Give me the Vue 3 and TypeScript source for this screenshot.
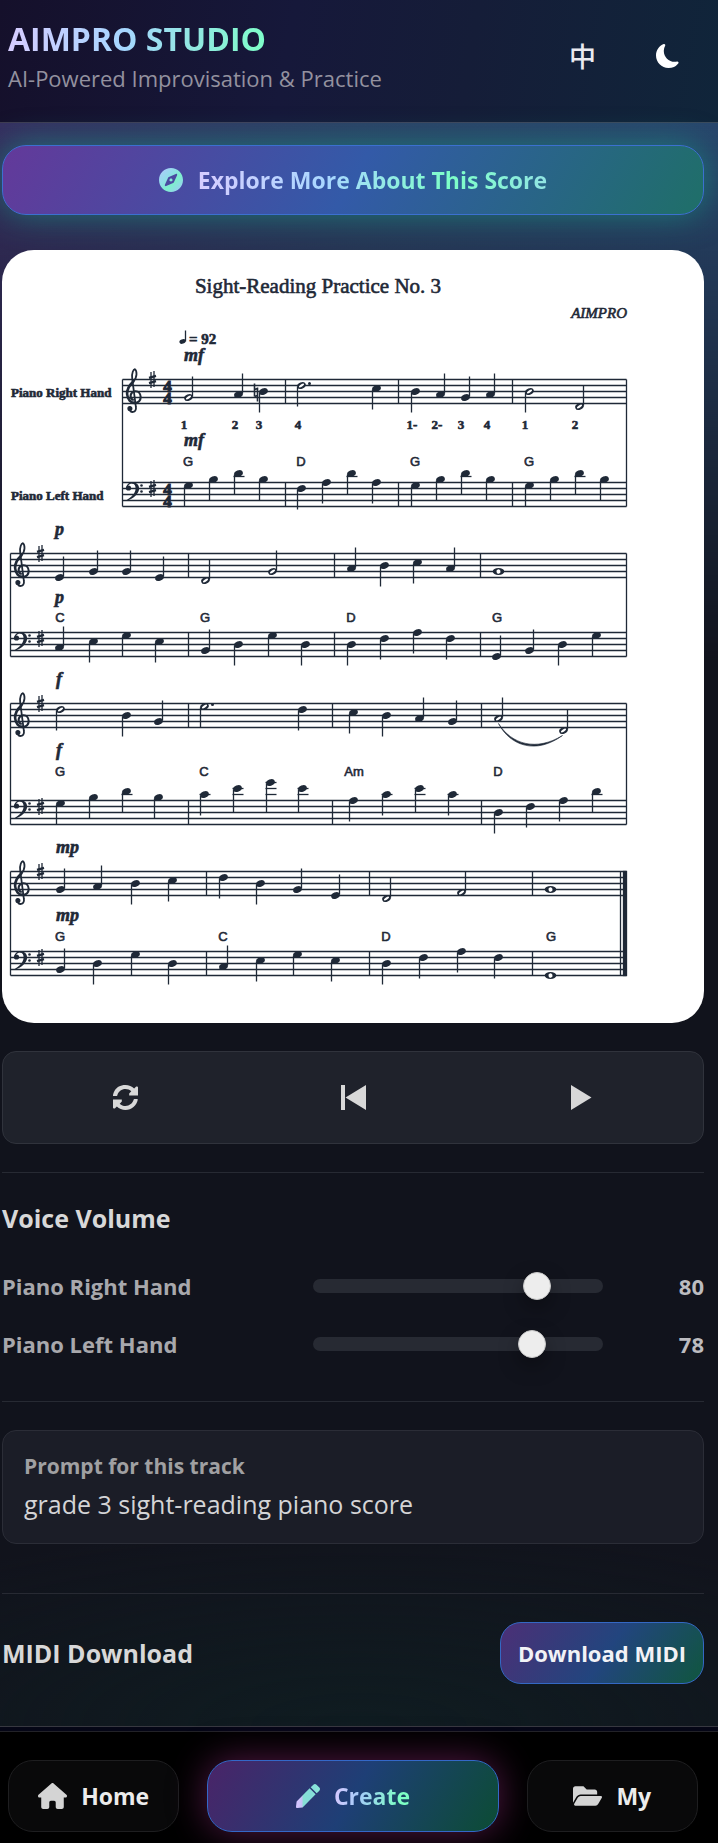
<script setup lang="ts">
import { computed, ref } from 'vue'

type Stem = 'up' | 'down' | 'none'
type Kind = 'quarter' | 'half' | 'whole'

interface Note {
  x: number
  step: number
  stem: Stem
  kind: Kind
  dot: boolean
}

interface Staff {
  top: number
  clef: 'treble' | 'bass'
  notes: Note[]
}

interface Label {
  x: number
  y: number
  text: string
}

interface System {
  left: number
  bars: number[]
  staves: Staff[]
  final: boolean
}

const RIGHT = 626

// "x:step" with u/d for the stem, h = half, w = whole, . = dotted
function parse(line: string): Note[] {
  return line.split(' ').map((token) => {
    const [x, rest] = token.split(':')
    return {
      x: Number(x),
      step: parseInt(rest, 10),
      stem: rest.includes('u') ? 'up' : rest.includes('d') ? 'down' : 'none',
      kind: rest.includes('w') ? 'whole' : rest.includes('h') ? 'half' : 'quarter',
      dot: rest.includes('.'),
    }
  })
}

const systems: System[] = [
  {
    left: 122,
    bars: [285, 398, 512],
    final: false,
    staves: [
      { top: 379, clef: 'treble', notes: parse('188:6uh 238:5u 263:4d 301:2dh. 376:3d 415:4d 440:5u 465:6u 490:5u 529:4dh 579:9uh') },
      { top: 482, clef: 'bass', notes: parse('188:1d 213:-1d 238:-3d 263:-1d 301:2d 326:0d 351:-3d 376:0d 415:1d 440:-1d 465:-3d 490:-1d 529:1d 554:-1d 579:-3d 604:-1d') },
    ],
  },
  {
    left: 10,
    bars: [188, 334, 480],
    final: false,
    staves: [
      { top: 553, clef: 'treble', notes: parse('59:8u 93:6u 126:6u 159:8u 205:9uh 272:6uh 351:5u 384:4d 417:3d 450:5u 498:6w') },
      { top: 632, clef: 'bass', notes: parse('59:5u 93:3d 126:1d 159:3d 205:6u 238:4d 272:1d 305:4d 351:4d 384:2d 417:0d 450:2d 496:8u 529:6u 562:4d 596:1d') },
    ],
  },
  {
    left: 10,
    bars: [188, 332, 481],
    final: false,
    staves: [
      { top: 703, clef: 'treble', notes: parse('60:2dh 126:4d 158:6u 204:1dh. 302:2d 353:3d 386:4d 419:5u 452:6u 498:5uh 563:9uh') },
      { top: 800, clef: 'bass', notes: parse('60:1d 93:-1d 126:-3d 158:-1d 204:-2d 237:-4d 270:-6d 302:-4d 353:0d 386:-2d 419:-4d 452:-2d 498:4d 530:2d 563:0d 596:-3d') },
    ],
  },
  {
    left: 10,
    bars: [206, 369, 532],
    final: true,
    staves: [
      { top: 871, clef: 'treble', notes: parse('60:6u 97:5u 135:4d 172:3d 223:2d 260:4d 297:6u 335:8u 386:9uh 461:7uh 550:6w') },
      { top: 951, clef: 'bass', notes: parse('60:6u 97:4d 135:1d 172:4d 223:5u 260:3d 297:1d 335:3d 386:4d 423:2d 461:0d 498:2d 550:8w') },
    ],
  },
]

const fingers: Label[] = [
  [184, '1'], [235, '2'], [259, '3'], [298, '4'], [412, '1-'], [437, '2-'],
  [461, '3'], [487, '4'], [525, '1'], [575, '2'],
].map(([x, text]) => ({ x: x as number, y: 429, text: text as string }))

const chords: Label[] = [
  { x: 188, y: 466, text: 'G' }, { x: 301, y: 466, text: 'D' }, { x: 415, y: 466, text: 'G' }, { x: 529, y: 466, text: 'G' },
  { x: 60, y: 622, text: 'C' }, { x: 205, y: 622, text: 'G' }, { x: 351, y: 622, text: 'D' }, { x: 497, y: 622, text: 'G' },
  { x: 60, y: 776, text: 'G' }, { x: 204, y: 776, text: 'C' }, { x: 354, y: 776, text: 'Am' }, { x: 498, y: 776, text: 'D' },
  { x: 60, y: 941, text: 'G' }, { x: 223, y: 941, text: 'C' }, { x: 386, y: 941, text: 'D' }, { x: 551, y: 941, text: 'G' },
]

const dynamics: Label[] = [
  { x: 184, y: 361, text: 'mf' }, { x: 184, y: 446, text: 'mf' },
  { x: 55, y: 535, text: 'p' }, { x: 55, y: 603, text: 'p' },
  { x: 56, y: 685, text: 'f' }, { x: 56, y: 756, text: 'f' },
  { x: 56, y: 853, text: 'mp' }, { x: 56, y: 921, text: 'mp' },
]

function noteY(staff: Staff, note: Note): number {
  return staff.top + note.step * 3
}

function stemPath(staff: Staff, note: Note): string {
  const y = noteY(staff, note)
  if (note.stem === 'up') return `M${note.x + 4} ${y - 1}V${y - 21}`
  const end = note.step < -3 ? staff.top + 12 : y + 21
  return `M${note.x - 4} ${y + 1}V${end}`
}

function ledgers(staff: Staff, note: Note): number[] {
  const out: number[] = []
  for (let s = -2; s >= note.step; s -= 2) out.push(staff.top + s * 3)
  return out
}

function staffLines(system: System, staff: Staff): string {
  return [0, 1, 2, 3, 4].map((i) => `M${system.left} ${staff.top + i * 6}H${RIGHT}`).join('')
}

function barLines(system: System): string {
  const [upper, lower] = system.staves
  const inner = system.staves
    .flatMap((s) => system.bars.map((x) => `M${x} ${s.top}v24`))
    .join('')
  const end = system.final ? 620 : RIGHT
  return `${inner}M${system.left} ${upper.top}V${lower.top + 24}M${end} ${upper.top}V${lower.top + 24}`
}

const voices = ref([
  { id: 'right', name: 'Piano Right Hand', value: 80 },
  { id: 'left', name: 'Piano Left Hand', value: 78 },
])

const playing = ref(false)
const playLabel = computed(() => (playing.value ? 'Pause' : 'Play'))
</script>

<template>
  <div class="page">
    <header class="top">
      <div class="brand">
        <h1>AIMPRO STUDIO</h1>
        <p>AI-Powered Improvisation &amp; Practice</p>
      </div>
      <div class="tools">
        <button type="button" class="tool" lang="zh">中</button>
        <button type="button" class="tool" aria-label="Dark mode">
          <svg class="i24" viewBox="0 0 16 16" fill="#fff"><path d="M6 .278a.77.77 0 0 1 .08.858 7.2 7.2 0 0 0-.878 3.46c0 4.021 3.278 7.277 7.318 7.277q.792-.001 1.533-.16a.79.79 0 0 1 .81.316.73.73 0 0 1-.031.893A8.35 8.35 0 0 1 8.344 16C3.734 16 0 12.286 0 7.71 0 4.266 2.114 1.312 5.124.06A.75.75 0 0 1 6 .278" /></svg>
        </button>
      </div>
    </header>

    <main class="content">
      <button type="button" class="explore">
        <svg class="i24" viewBox="0 8 496 496">
          <defs>
            <linearGradient id="compass-fill" x1="0" y1="0" x2="1" y2="1">
              <stop offset="0" stop-color="#b4c8ff" />
              <stop offset="0.35" stop-color="#92dcea" />
              <stop offset="0.6" stop-color="#7df0cc" />
              <stop offset="1" stop-color="#a4c4ff" />
            </linearGradient>
          </defs>
          <path fill="url(#compass-fill)" d="M225.38 233.37c-12.5 12.5-12.5 32.76 0 45.25 12.49 12.5 32.76 12.5 45.25 0 12.5-12.5 12.5-32.76 0-45.25-12.5-12.49-32.76-12.49-45.25 0zM248 8C111.03 8 0 119.03 0 256s111.03 248 248 248 248-111.03 248-248S384.97 8 248 8zm126.14 148.05L308.17 300.4a31.938 31.938 0 0 1-15.77 15.78l-144.34 65.97c-16.65 7.61-33.81-9.55-26.2-26.2l65.98-144.35a31.938 31.938 0 0 1 15.77-15.78l144.34-65.97c16.65-7.6 33.8 9.55 26.19 26.2z" />
        </svg>
        <span>Explore More About This Score</span>
      </button>

      <section class="score" aria-label="Score">
        <svg viewBox="2 250 702 773" role="img" aria-label="Sight-Reading Practice No. 3">
          <defs>
            <g id="treble" fill="none" stroke-linecap="round" stroke-linejoin="round">
              <path stroke-width="1.8" d="M-4 11.500c0 4.500 7.500 4 6.400-2L-1.300-19C-2-25 0-28 1.400-28.300c2 1.500 2.800 8-1.600 12.300" />
              <path stroke-width="2.600" d="M-.2-16C-5-11.500-6.600-8-6.400-3.500-6 2 -2.500 5.400 1.200 5.400" />
              <path stroke-width="2.100" d="M1.200 5.400C5 5.400 7.200 2.800 7.200-.4 7.200-4 4.800-6.200 2-6.200c-3 0-4.900 2-4.900 4.700 0 2 1 3.300 2.300 3.800" />
              <circle cx="-3.600" cy="11" r="1.900" fill="#1f2937" />
            </g>
            <g id="bass">
              <circle cx="-5" cy="5.500" r="2.600" stroke="none" />
              <path fill="none" stroke-width="1.300" stroke-linecap="round" d="M-6.600 5C-6.400 1.800-3.500.3-1.200.4" />
              <path stroke="none" d="M-1.600-.2C3.200-.5 5.800 2.500 5.600 6.600 5.200 12-.8 16.500-7 18.600c-.6 0-.6-.6-.2-.9C-2 14.500 1.800 11 2.100 6.200 2.200 3 1 1-1.500.9z" />
              <circle cx="8" cy="3" r="1.300" stroke="none" />
              <circle cx="8" cy="9" r="1.300" stroke="none" />
            </g>
            <g id="sharp" fill="none">
              <path stroke-width="1.300" d="M-1.500-7.500v16M1.500-8.500v16" />
              <path stroke-width="2.300" d="M-3.500-1.600l7-2M-3.500 3.600l7-2" />
            </g>
          </defs>

          <text x="318" y="293" class="title">Sight-Reading Practice No. 3</text>
          <text x="627" y="318" class="author">AIMPRO</text>
          <text x="11" y="397" class="part">Piano Right Hand</text>
          <text x="11" y="500" class="part">Piano Left Hand</text>
          <text x="189" y="344" class="tempo">= 92</text>

          <g transform="translate(.5 .5)" class="ink">
            <ellipse cx="182" cy="341" rx="3.200" ry="2.200" transform="rotate(-20 182 341)" stroke="none" />
            <path d="M185 341V330" />

            <g v-for="(system, si) in systems" :key="si">
              <path :d="barLines(system)" />
              <rect v-if="system.final" x="623" :y="system.staves[0].top" width="3" :height="system.staves[1].top + 24 - system.staves[0].top" />
              <g v-for="staff in system.staves" :key="staff.top">
                <path :d="staffLines(system, staff)" />
                <use v-if="staff.clef === 'treble'" href="#treble" :x="system.left + 11" :y="staff.top + 18" />
                <use v-else href="#bass" :x="system.left + 11" :y="staff.top" />
                <use href="#sharp" :x="system.left + 30" :y="staff.top + (staff.clef === 'bass' ? 6 : 0)" />
                <template v-if="si === 0">
                  <text x="167" :y="staff.top + 12" class="meter">4</text>
                  <text x="167" :y="staff.top + 24" class="meter">4</text>
                </template>
                <g v-for="note in staff.notes" :key="note.x">
                  <path v-for="y in ledgers(staff, note)" :key="y" :d="`M${note.x - 5} ${y}h11`" />
                  <path v-if="note.stem !== 'none'" :d="stemPath(staff, note)" />
                  <g :transform="`translate(${note.x} ${noteY(staff, note)})`">
                    <ellipse v-if="note.kind === 'quarter'" rx="4.500" ry="3.200" transform="rotate(-22)" stroke="none" />
                    <template v-else-if="note.kind === 'half'">
                      <ellipse rx="3.800" ry="2.500" transform="rotate(-22)" />
                      <ellipse rx="3" ry="1.100" transform="rotate(-32)" fill="#fff" stroke="none" />
                    </template>
                    <template v-else>
                      <ellipse rx="5.800" ry="3.400" stroke="none" />
                      <ellipse rx="2" ry="2.200" transform="rotate(-20)" fill="#fff" stroke="none" />
                    </template>
                    <circle v-if="note.dot" cx="8" cy="-2" r="1.500" stroke="none" />
                  </g>
                </g>
              </g>
            </g>

            <path d="M254 383v13M257 387v14M254 389l3-1M254 396l3-1" stroke-width="1.600" fill="none" />
            <path d="M498 723C510 746 536 754 562 735 536 751 511 744 498 723z" stroke-width=".6" />
          </g>

          <text v-for="f in fingers" :key="'f' + f.x" :x="f.x" :y="f.y" class="finger">{{ f.text }}</text>
          <text v-for="c in chords" :key="'c' + c.x + c.y" :x="c.x" :y="c.y" class="chord">{{ c.text }}</text>
          <text v-for="d in dynamics" :key="'d' + d.y" :x="d.x" :y="d.y" class="dynamic">{{ d.text }}</text>
        </svg>
      </section>

      <section class="player" aria-label="Player">
        <button type="button" aria-label="Loop">
          <svg class="i25" viewBox="8 8 496 496" fill="currentColor"><path d="M370.720 133.280C339.458 104.008 298.888 87.962 255.848 88c-77.458.068-144.328 53.178-162.791 126.850-1.344 5.363-6.122 9.150-11.651 9.150H8.103C10 202 33.933 8 256 8c66.448 0 126.791 26.136 171.315 68.685L463.030 40.970C478 34 504 36 504 57.941V216H329l0-41zM8 296h175v41l-41.750 41.750c31.262 29.273 71.835 45.319 114.876 45.280 77.418-.07 144.315-53.144 162.787-126.849 1.344-5.363 6.122-9.150 11.651-9.150h57.304c7.498 0 13.194 6.807 11.807 14.176C478.067 417.076 377.187 504 256 504c-66.448 0-126.791-26.136-171.315-68.685L48.970 471.030C34 478 8 475 8 454z" /></svg>
        </button>
        <button type="button" aria-label="Back to start">
          <svg class="i25" viewBox="0 0 25 25" fill="currentColor"><path d="M0 0h4v25H0zM25 0v25L4.500 12.500z" /></svg>
        </button>
        <button type="button" :aria-label="playLabel" @click="playing = !playing">
          <svg class="i25" viewBox="0 0 25 25" fill="currentColor"><path d="M2 0l20.500 12.500L2 25z" /></svg>
        </button>
      </section>

      <section class="block voices">
        <h2>Voice Volume</h2>
        <div v-for="voice in voices" :key="voice.id" class="voice">
          <label :for="voice.id">{{ voice.name }}</label>
          <input :id="voice.id" v-model.number="voice.value" type="range" min="0" max="100" />
          <output :for="voice.id">{{ voice.value }}</output>
        </div>
      </section>

      <section class="block">
        <div class="prompt">
          <h3>Prompt for this track</h3>
          <p>grade 3 sight-reading piano score</p>
        </div>
      </section>

      <section class="block midi">
        <h2>MIDI Download</h2>
        <button type="button" class="download">Download MIDI</button>
      </section>
    </main>

    <nav class="nav" aria-label="Main">
      <a href="#home" class="tab">
        <svg class="i29" viewBox="0 0 576 512" fill="#d4d4d4"><path d="M575.800 255.500c0 18-15 32.100-32 32.100h-32l.7 160.200c0 2.700-.2 5.400-.5 8.100V472c0 22.100-17.900 40-40 40H456c-1.100 0-2.200 0-3.300-.1c-1.400 .1-2.800 .1-4.200 .1H416 392c-22.100 0-40-17.900-40-40V448 384c0-17.700-14.300-32-32-32H256c-17.700 0-32 14.300-32 32v64 24c0 22.100-17.900 40-40 40H160 128.100c-1.500 0-3-.1-4.500-.2c-1.200 .1-2.400 .2-3.600 .2H104c-22.100 0-40-17.900-40-40V360c0-.9 0-1.900 .1-2.800V287.600H32c-18 0-32-14-32-32.100c0-9 3-17 10-24L266.400 8c7-7 15-8 22-8s15 2 21 7L564.800 231.500c8 7 12 15 11 24z" /></svg>
        <span>Home</span>
      </a>
      <a href="#create" class="tab active" aria-current="page">
        <svg class="i24" viewBox="0 0 512 512">
          <defs>
            <linearGradient id="pen-fill" x1="0" y1="0" x2="1" y2="0">
              <stop offset="0.100" stop-color="#d4c4ff" />
              <stop offset="0.250" stop-color="#c4c0f4" />
              <stop offset="0.300" stop-color="#86e0d4" />
              <stop offset="0.600" stop-color="#84dcd8" />
              <stop offset="1" stop-color="#8ce8d8" />
            </linearGradient>
          </defs>
          <path fill="url(#pen-fill)" d="M290.740 93.240l128.020 128.020-277.990 277.990-114.140 12.600C11.350 513.540-1.560 500.620.14 485.340l12.700-114.220 277.900-277.880zm207.200-19.060l-60.110-60.110c-18.750-18.750-49.160-18.750-67.910 0l-56.550 56.550 128.020 128.020 56.550-56.550c18.750-18.760 18.750-49.160 0-67.910z" />
        </svg>
        <span>Create</span>
      </a>
      <a href="#my" class="tab">
        <svg class="i29" viewBox="0 0 576 512" fill="#d4d4d4"><path d="M572.694 292.093L500.270 416.248A63.997 63.997 0 0 1 444.989 448H45.025c-18.523 0-30.064-20.093-20.731-36.093l72.424-124.155A64 64 0 0 1 152 256h399.964c18.523 0 30.064 20.093 20.730 36.093zM152 224h328v-48c0-26.510-21.490-48-48-48H272l-64-64H48C21.490 64 0 85.490 0 112v278.046l69.077-118.418C86.214 242.250 117.989 224 152 224z" /></svg>
        <span>My</span>
      </a>
    </nav>
  </div>
</template>

<style>
body {
  margin: 0;
  background: #050616;
}
</style>

<style scoped>
* {
  box-sizing: border-box;
}

.page {
  font-family: 'Open Sans', 'Noto Sans', 'Noto Sans CJK SC', sans-serif;
  color: #d8d8d8;
}

h1,
h2,
h3,
p {
  margin: 0;
}

button {
  font: inherit;
  color: inherit;
  background: none;
  border: 0;
  padding: 0;
  cursor: pointer;
}

.i24 {
  width: 24px;
  height: 24px;
}

.i25 {
  width: 25px;
  height: 25px;
}

.i29 {
  width: 29px;
  height: 26px;
}

.top {
  display: flex;
  align-items: center;
  justify-content: space-between;
  height: 123px;
  padding: 0 22px 8px 8px;
  border-bottom: 1px solid rgba(255, 255, 255, 0.18);
  background: linear-gradient(100deg, #15102b 0%, #16183a 40%, #151d38 65%, #10253a 100%);
}

.brand h1 {
  width: fit-content;
  font-size: 32px;
  line-height: 42px;
  font-weight: 700;
  background: linear-gradient(100deg, #d8ccff, #a6d6ff 45%, #92e6e2 70%, #7dffc8);
  background-clip: text;
  color: transparent;
}

.brand p {
  font-size: 22px;
  line-height: 36px;
  color: #93919f;
}

.tools {
  display: flex;
  gap: 28px;
}

.tool {
  display: grid;
  place-items: center;
  width: 57px;
  height: 57px;
  padding-bottom: 2px;
  font-family: 'Noto Sans CJK SC', sans-serif;
  font-size: 27px;
  line-height: 32px;
  font-weight: 500;
  color: #eaeaf0;
}

.content {
  display: flex;
  flex-direction: column;
  padding: 22px 14px 42px 2px;
  border-bottom: 1px solid rgba(255, 255, 255, 0.16);
  background:
    radial-gradient(ellipse 90% 200px at 50% 100%, rgba(14, 34, 36, 0.6), transparent),
    linear-gradient(180deg, transparent, #11131c 540px),
    linear-gradient(90deg, #362f60, #2c4166 50%, #28466c) 0 0 / 100% 560px no-repeat,
    #11131c;
}

.explore {
  display: flex;
  align-items: center;
  justify-content: center;
  gap: 15px;
  height: 70px;
  border: 1px solid #3c70d0;
  border-radius: 24px;
  font-size: 23px;
  line-height: 32px;
  font-weight: 700;
  background: linear-gradient(120deg, #63399a, #335aa8 50%, #1f6f68);
  box-shadow: 0 0 32px rgba(24, 160, 140, 0.6);
}

.explore span {
  background: linear-gradient(100deg, #d8ccff, #a8d8ff 38%, #7dffc8 72%, #92e4e4);
  background-clip: text;
  color: transparent;
}

.score {
  margin-top: 35px;
  border-radius: 32px;
  background: #fff;
}

.score svg {
  display: block;
  width: 100%;
}

.score text {
  font-family: 'Liberation Serif', serif;
  fill: #1f2937;
  stroke: #1f2937;
  stroke-width: 0.6px;
}

.score .ink {
  fill: #1f2937;
  stroke: #1f2937;
  stroke-width: 1.3px;
}

.score .title {
  font-size: 21px;
  text-anchor: middle;
}

.score .author {
  font-size: 15px;
  font-style: italic;
  text-anchor: end;
}

.score .part {
  font-size: 13px;
  font-weight: 700;
}

.score .tempo {
  font-size: 15px;
  font-weight: 700;
}

.score .meter {
  font-size: 17px;
  font-weight: 700;
  text-anchor: middle;
  stroke-width: 1px;
}

.score .finger {
  font-size: 13px;
  font-weight: 700;
  text-anchor: middle;
}

.score .chord {
  font-family: 'Liberation Sans', sans-serif;
  font-size: 13px;
  text-anchor: middle;
}

.score .dynamic {
  font-size: 18px;
  font-weight: 700;
  font-style: italic;
}

.player {
  display: grid;
  grid-template-columns: repeat(3, 1fr);
  height: 93px;
  margin-top: 28px;
  padding: 0 8px;
  border: 1px solid #30333c;
  border-radius: 14px;
  background: #1f222b;
}

.player button {
  display: grid;
  place-items: center;
}

.block {
  margin-top: 28px;
  padding-top: 28px;
  border-top: 1px solid #272a33;
}

h2 {
  font-size: 25px;
  line-height: 34px;
  font-weight: 700;
}

.voices {
  display: flex;
  flex-direction: column;
  gap: 16px;
  padding-bottom: 8px;
}

.voices h2 {
  margin-bottom: 14px;
}

.voice {
  display: grid;
  grid-template-columns: 35fr 36fr 9fr;
  align-items: center;
  gap: 28px;
  min-height: 42px;
  font-size: 22px;
  line-height: 32px;
  font-weight: 700;
  color: #a8a8ac;
}

.voice output {
  text-align: right;
  color: #bcbcc0;
}

.voice input {
  appearance: none;
  width: 100%;
  height: 14px;
  margin: 0;
  border-radius: 7px;
  background: #272a33;
}

.voice input::-webkit-slider-thumb {
  appearance: none;
  width: 28px;
  height: 28px;
  border: 1px solid #c8c8c8;
  border-radius: 50%;
  background: #ededed;
  box-shadow: 0 8px 20px rgba(0, 0, 0, 0.35);
}

.prompt {
  height: 114px;
  padding: 19px 21px;
  border: 1px solid #2b2d37;
  border-radius: 14px;
  background: #1b1d27;
}

.prompt h3 {
  font-size: 21px;
  line-height: 32px;
  font-weight: 700;
  color: #a0a0a2;
}

.prompt p {
  font-size: 25px;
  line-height: 44px;
  color: #d4d4d6;
}

.midi {
  display: flex;
  align-items: center;
  justify-content: space-between;
  margin-top: 49px;
}

.download {
  height: 62px;
  padding: 0 17px;
  border: 1px solid #3468c4;
  border-radius: 21px;
  font-size: 22px;
  line-height: 32px;
  font-weight: 700;
  color: #f2f2f6;
  background: linear-gradient(125deg, #4c2f76, #22457e 52%, #10563e);
}

.nav {
  display: grid;
  grid-template-columns: 10fr 17fr 10fr;
  gap: 28px;
  margin-top: 4px;
  padding: 28px 20px 11px 8px;
  border-top: 1px solid #222228;
  background: #000;
}

.tab {
  display: flex;
  align-items: center;
  justify-content: center;
  gap: 14px;
  height: 72px;
  border: 1px solid #1e1e20;
  border-radius: 25px;
  font-size: 23px;
  line-height: 32px;
  font-weight: 700;
  text-decoration: none;
  color: #ececec;
  background: #09090a;
}

.tab.active {
  border-color: #3468c8;
  background: linear-gradient(120deg, #4a2468, #1e3f76 50%, #0c4c34);
  box-shadow: 0 0 36px rgba(168, 48, 140, 0.5);
}

.tab.active span {
  background: linear-gradient(100deg, #dcc8ff, #a4ccf8 35%, #7dffc4 85%);
  background-clip: text;
  color: transparent;
}
</style>
